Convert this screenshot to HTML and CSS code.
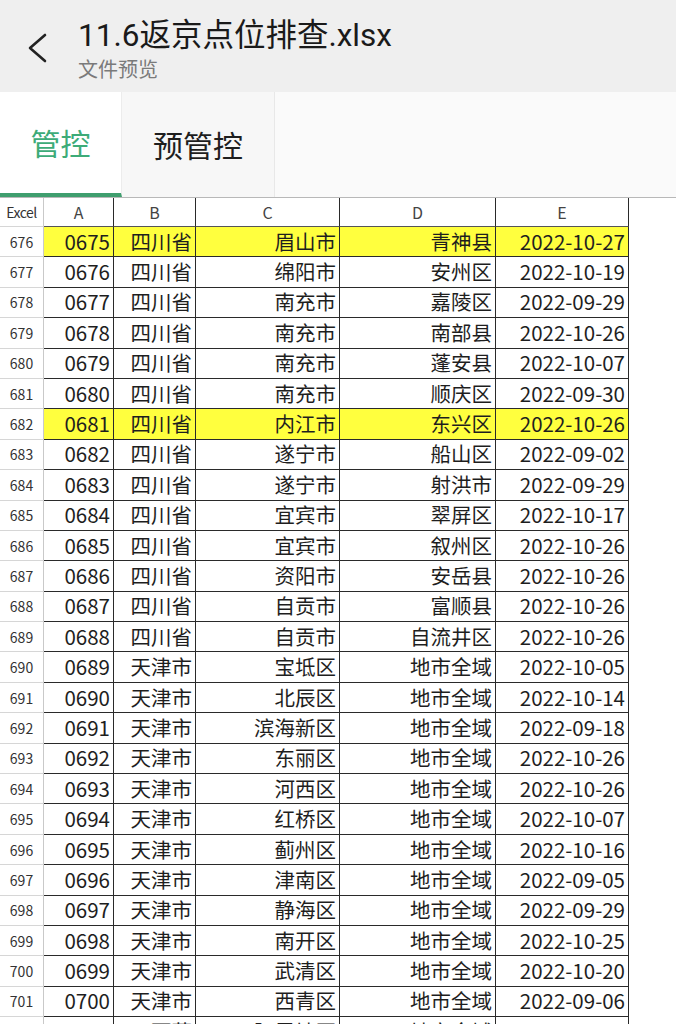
FILE: index.html
```html
<!DOCTYPE html>
<html lang="zh">
<head>
<meta charset="utf-8">
<link rel="stylesheet" href="styles.css">
</head>
<body>
<header class="topbar">
  <svg class="back" width="24" height="32" viewBox="0 0 24 32"><polyline points="19,3 4,16 19,29" fill="none" stroke="#222" stroke-width="2.6" stroke-linecap="round" stroke-linejoin="round"/></svg>
  <div class="titles">
    <div class="title">11.6返京点位排查.xlsx</div>
    <div class="subtitle">文件预览</div>
  </div>
</header>
<nav class="tabs">
  <div class="tab active">管控</div>
  <div class="tab">预管控</div>
  <div class="tab-rest"></div>
</nav>
<div class="sheet" id="sheet">
  <div class="row head">
    <div class="rn">Excel</div><div class="c ch">A</div><div class="c ch">B</div><div class="c ch">C</div><div class="c ch">D</div><div class="c ch">E</div><div class="tail"></div>
  </div>
</div>
<script src="app.js"></script>
</body>
</html>
```
FILE: app.js
```js
const data = [
  [676,"0675","四川省","眉山市","青神县","2022-10-27",1],
  [677,"0676","四川省","绵阳市","安州区","2022-10-19"],
  [678,"0677","四川省","南充市","嘉陵区","2022-09-29"],
  [679,"0678","四川省","南充市","南部县","2022-10-26"],
  [680,"0679","四川省","南充市","蓬安县","2022-10-07"],
  [681,"0680","四川省","南充市","顺庆区","2022-09-30"],
  [682,"0681","四川省","内江市","东兴区","2022-10-26",1],
  [683,"0682","四川省","遂宁市","船山区","2022-09-02"],
  [684,"0683","四川省","遂宁市","射洪市","2022-09-29"],
  [685,"0684","四川省","宜宾市","翠屏区","2022-10-17"],
  [686,"0685","四川省","宜宾市","叙州区","2022-10-26"],
  [687,"0686","四川省","资阳市","安岳县","2022-10-26"],
  [688,"0687","四川省","自贡市","富顺县","2022-10-26"],
  [689,"0688","四川省","自贡市","自流井区","2022-10-26"],
  [690,"0689","天津市","宝坻区","地市全域","2022-10-05"],
  [691,"0690","天津市","北辰区","地市全域","2022-10-14"],
  [692,"0691","天津市","滨海新区","地市全域","2022-09-18"],
  [693,"0692","天津市","东丽区","地市全域","2022-10-26"],
  [694,"0693","天津市","河西区","地市全域","2022-10-26"],
  [695,"0694","天津市","红桥区","地市全域","2022-10-07"],
  [696,"0695","天津市","蓟州区","地市全域","2022-10-16"],
  [697,"0696","天津市","津南区","地市全域","2022-09-05"],
  [698,"0697","天津市","静海区","地市全域","2022-09-29"],
  [699,"0698","天津市","南开区","地市全域","2022-10-25"],
  [700,"0699","天津市","武清区","地市全域","2022-10-20"],
  [701,"0700","天津市","西青区","地市全域","2022-09-06"],
  [702,"","西藏","阿里地区","地市全域",""]
];
const sheet = document.getElementById('sheet');
for (const r of data) {
  const row = document.createElement('div');
  row.className = 'row' + (r[6] ? ' hl' : '');
  let html = '<div class="rn">' + r[0] + '</div>';
  for (let i = 1; i <= 5; i++) html += '<div class="c">' + r[i] + '</div>';
  html += '<div class="tail"></div>';
  row.innerHTML = html;
  sheet.appendChild(row);
}
```
FILE: styles.css
```css
html, body {
  margin: 0;
  padding: 0;
  background: #ffffff;
}
body {
  width: 676px;
  height: 1024px;
  overflow: hidden;
  font-family: Roboto, "Noto Sans CJK SC", sans-serif;
  color: #1c1c1c;
}
.topbar {
  height: 92px;
  background: #efefef;
  display: flex;
  align-items: flex-start;
  box-sizing: border-box;
  padding-left: 26px;
}
.back {
  margin-top: 32px;
  flex: none;
}
.titles {
  margin-left: 28px;
  padding-top: 16px;
}
.title {
  font-size: 31.5px;
  line-height: 40px;
  color: #1a1a1a;
  white-space: nowrap;
}
.subtitle {
  font-size: 20px;
  line-height: 28px;
  color: #7a7a7a;
}
.tabs {
  height: 105px;
  display: flex;
  background: #f9f9f9;
  box-sizing: border-box;
}
.tab {
  font-family: "Noto Sans CJK SC", sans-serif;
  font-size: 30px;
  display: flex;
  align-items: center;
  justify-content: center;
  box-sizing: border-box;
  padding-bottom: 2px;
  color: #1e1e1e;
  background: #f7f7f7;
  border-right: 1px solid #e8e8e8;
  width: 153px;
}
.tab.active {
  width: 122px;
  background: #ffffff;
  color: #3dab78;
  border-bottom: 4px solid #3f9e6e;
  border-right: 1px solid #ececec;
}
.tab-rest {
  flex: 1;
  background: #fafafa;
}
.sheet {
  border-top: 1px solid #b8b8b8;
}
.row {
  display: grid;
  grid-template-columns: 44px 70px 82px 144px 156px 133px 1fr;
  height: 30.4px;
  font-family: "Noto Sans CJK SC", sans-serif;
}
.row > div {
  box-sizing: border-box;
  white-space: nowrap;
}
.rn {
  font-size: 14px;
  line-height: 20px;
  color: #333;
  display: flex;
  align-items: center;
  justify-content: center;
  border-right: 1px solid #c9c9c9;
  border-bottom: 1px solid #d6d6d6;
  background: #fff;
}
.c {
  font-size: 20.5px;
  line-height: 26px;
  color: #1e1e1e;
  display: flex;
  align-items: center;
  justify-content: flex-end;
  padding-right: 3px;
  padding-bottom: 2px;
  border-right: 1.5px solid #2a2a2a;
  border-bottom: 1.5px solid #2a2a2a;
}
.head {
  height: 29px;
}
.head .rn {
  font-size: 14px;
  color: #333;
  letter-spacing: -0.5px;
}
.head .ch {
  justify-content: center;
  font-size: 16px;
  line-height: 22px;
  color: #444;
  padding: 0;
  border-bottom: 1.5px solid #555;
}
.hl .c {
  background: #ffff3e;
}
.tail {
  background: #fff;
}
```
